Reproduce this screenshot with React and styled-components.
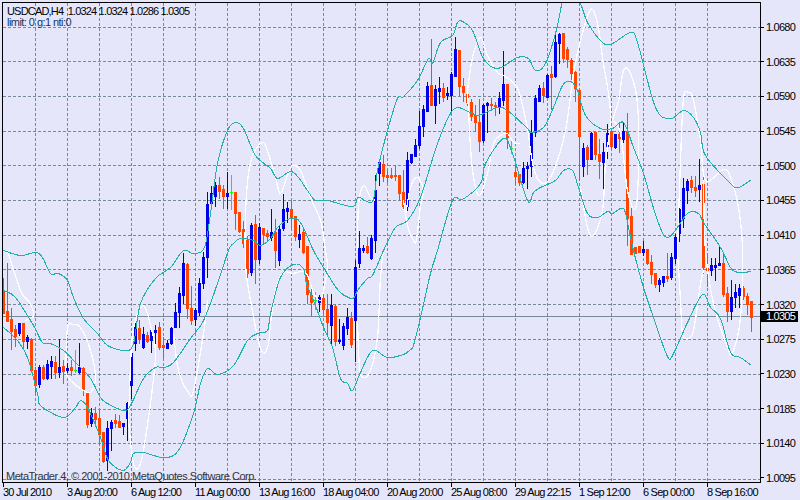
import styled, { createGlobalStyle } from 'styled-components'

// [colour, high, body top, body bottom, low] in screen pixels, one bar every 4px from x=3
const bars = [
  ['r',278,290,313,313],['r',263,311,321,321],['r',308,319,331,349],['r',325,329,336,346],['b',323,323,333,335],
  ['r',323,323,341,348],['b',335,337,341,348],['r',338,339,370,371],['r',367,370,385,394],['b',365,367,384,387],
  ['r',365,367,378,379],['b',360,364,378,379],['b',356,361,366,378],['r',356,362,372,378],['b',339,367,372,377],
  ['r',360,366,371,383],['b',363,368,370,372],['r',360,367,370,375],['g',350,370,370,372],['b',343,367,372,373],
  ['r',367,368,390,395],['r',392,393,424,427],['b',408,413,423,426],['r',407,413,419,425],['r',410,418,434,443],
  ['r',432,432,461,462],['b',421,428,460,470],['b',420,422,428,450],['r',414,420,423,427],['r',415,421,427,427],
  ['b',423,423,426,434],['b',402,403,418,440],['b',344,353,385,398],['b',320,326,343,350],['r',320,328,339,343],
  ['b',327,334,347,348],['r',332,335,341,342],['b',330,330,340,352],['b',325,330,332,348],['r',322,327,347,349],
  ['r',337,345,347,357],['b',340,343,348,348],['b',327,328,343,344],['b',303,312,327,327],['b',287,293,312,327],
  ['b',253,263,295,303],['r',263,264,308,318],['r',286,308,320,324],['b',308,310,319,325],['b',278,283,312,315],
  ['b',252,257,283,288],['b',192,204,257,277],['b',186,193,203,209],['b',182,185,196,206],['r',177,185,191,198],
  ['r',185,189,196,208],['b',172,193,196,208],['g',175,192,192,209],['r',192,192,213,229],['r',212,212,231,232],
  ['r',221,229,243,247],['r',236,240,273,278],['b',223,225,272,275],['r',215,224,259,283],['b',223,227,259,263],
  ['r',228,228,234,243],['r',230,233,236,240],['b',209,232,237,240],['r',219,232,250,267],['b',225,229,260,265],
  ['b',194,209,228,230],['b',202,208,211,222],['r',201,209,217,227],['r',216,216,236,240],['b',225,234,239,247],
  ['r',228,232,252,253],['r',246,246,294,303],['r',285,295,302,315],['g',292,300,300,309],['b',295,297,302,311],
  ['r',288,298,309,313],['r',294,309,322,334],['b',294,305,325,344],['r',304,306,341,345],['b',319,340,341,343],
  ['b',323,326,345,349],['b',308,317,328,334],['r',312,318,344,347],['b',260,267,320,361],['b',231,248,263,267],
  ['b',245,248,250,252],['r',237,246,252,253],['b',235,238,258,259],['b',175,190,240,252],['b',162,162,173,185],
  ['r',155,164,176,181],['r',170,175,177,182],['r',168,175,177,178],['r',165,175,176,180],['r',175,175,193,199],
  ['r',170,192,206,208],['b',152,160,206,210],['b',154,154,162,163],['b',139,145,156,156],['b',111,126,145,148],
  ['b',105,109,126,136],['b',82,86,111,111],['r',39,85,105,105],['b',85,89,105,123],['b',77,88,91,103],
  ['r',83,88,97,101],['b',87,93,95,99],['b',72,74,95,111],['b',37,49,76,76],['r',50,50,86,95],
  ['r',78,86,92,101],['r',88,94,102,105],['r',99,102,116,120],['r',105,115,122,131],['r',99,122,141,151],
  ['b',104,105,140,142],['b',102,103,105,132],['r',98,104,105,110],['r',102,105,106,115],['b',92,98,106,113],
  ['b',51,84,100,105],['r',84,84,137,148],['g',139,148,148,153],['r',159,172,176,184],['r',174,174,182,185],
  ['b',162,168,182,183],['b',162,166,168,188],['b',120,132,166,176],['b',95,98,132,136],['b',85,88,101,101],
  ['r',82,88,95,102],['b',74,75,97,97],['r',66,74,77,109],['b',35,42,76,77],['b',33,34,43,63],
  ['r',33,33,58,62],['r',47,49,59,67],['r',58,60,73,79],['r',71,72,88,101],['r',90,90,136,180],
  ['b',143,148,166,176],['r',145,147,159,174],['b',132,133,159,159],['r',132,132,154,159],['r',139,154,161,178],
  ['b',143,152,162,188],['b',124,133,146,158],['r',131,131,146,148],['b',134,134,147,148],['r',124,134,138,152],
  ['b',122,131,139,142],['r',113,131,218,245],['r',208,216,254,254],['r',247,247,253,253],['r',246,246,252,252],
  ['b',241,249,252,255],['r',249,249,263,264],['r',255,262,274,283],['r',273,273,284,287],['b',278,280,284,291],
  ['b',276,276,282,286],['r',253,276,278,281],['b',253,257,277,279],['b',234,237,258,263],['b',180,209,233,241],
  ['b',178,188,218,227],['b',179,181,190,203],['r',176,180,187,192],['r',176,187,190,196],['b',159,185,189,201],
  ['r',170,184,267,273],['r',255,268,270,286],['b',258,265,270,275],['b',258,265,267,280],['b',247,263,265,265],
  ['r',253,263,294,296],['r',287,293,311,321],['b',280,297,311,319],['b',284,292,297,307],['b',284,288,295,307],
  ['r',286,288,296,299],['r',293,296,304,314],['r',301,301,317,331],
]

const upperBand = [[3,250],[20,255],[35,252],[42,257],[50,273],[58,273],[67,280],[73,297],[83,318],[97,333],[107,345],[125,350],[133,343],[140,303],[155,278],[170,267],[183,250],[193,253],[204,247],[210,213],[217,163],[227,130],[235,122],[243,128],[255,155],[270,168],[277,178],[290,171],[298,177],[307,190],[315,200],[327,200],[352,206],[358,197],[372,201],[377,170],[387,130],[397,98],[403,96],[417,80],[428,58],[432,63],[440,42],[452,35],[457,22],[462,21],[472,30],[483,58],[497,68],[517,57],[528,58],[535,70],[545,63],[555,33],[560,10],[563,0],[578,0],[587,22],[602,42],[612,43],[630,32],[637,42],[655,107],[670,118],[683,110],[693,117],[700,132],[705,155],[730,183],[738,187],[751,179]]

const middleBand = [[3,290],[15,297],[33,325],[42,342],[50,343],[63,350],[75,362],[90,378],[100,397],[107,403],[123,410],[130,405],[143,378],[155,367],[163,367],[173,362],[190,338],[203,320],[217,283],[228,250],[233,243],[240,238],[253,240],[260,245],[270,238],[277,227],[290,218],[300,222],[313,250],[323,267],[338,290],[352,298],[357,290],[367,278],[372,275],[380,257],[383,250],[395,227],[407,220],[420,197],[437,143],[453,109],[470,112],[478,115],[497,107],[507,110],[527,128],[530,132],[543,127],[553,107],[562,85],[570,81],[577,90],[585,115],[600,128],[612,128],[623,122],[633,147],[643,173],[657,220],[668,237],[687,213],[698,213],[703,222],[720,247],[730,267],[738,272],[751,271]]

const lowerBand = [[3,327],[17,340],[27,357],[37,393],[40,405],[63,417],[75,407],[80,400],[87,407],[100,437],[108,460],[122,470],[130,462],[133,453],[143,452],[163,457],[178,450],[193,413],[200,383],[207,368],[217,374],[233,365],[247,340],[257,333],[267,330],[270,313],[280,277],[293,264],[303,268],[306,283],[315,305],[323,327],[332,347],[340,378],[347,383],[352,390],[360,372],[372,350],[387,357],[403,354],[410,349],[413,345],[420,317],[430,273],[437,250],[452,200],[462,199],[480,183],[485,163],[503,138],[512,153],[527,200],[533,192],[540,187],[555,180],[563,170],[572,170],[578,187],[587,213],[597,217],[607,211],[612,213],[623,208],[628,227],[633,250],[643,287],[653,317],[667,356],[673,353],[687,322],[702,294],[710,307],[720,318],[730,352],[740,357],[751,365]]

const whiteLines = [
  [[7,250],[20,290],[29,302],[33,315],[25,320]],
  [[65,372],[67,327],[72,324],[80,327],[90,350],[95,377],[90,392],[80,388],[70,380],[65,372]],
  [[128,420],[131,345],[135,320],[143,305],[150,325],[155,355],[148,417],[140,463],[133,463],[128,420]],
  [[173,333],[178,370],[188,392],[193,390],[203,333],[207,300]],
  [[247,283],[257,337],[263,353],[268,343],[270,323],[275,290],[283,272],[292,273],[305,272],[313,292],[320,300],[323,290],[327,267],[325,250],[320,220],[310,197],[300,170],[292,165],[287,175],[280,193],[275,177],[270,160],[263,142],[253,153],[248,173],[245,213],[245,262],[247,283]],
  [[357,320],[359,367],[363,377],[370,370],[377,337],[380,277],[383,250]],
  [[357,250],[358,205],[363,185],[370,197],[375,200]],
  [[405,215],[410,187],[417,177],[423,190],[420,205],[416,239],[413,240],[407,225],[403,200]],
  [[467,90],[470,147],[473,177],[479,195],[487,173],[493,143],[500,135],[507,133],[513,142],[520,143]],
  [[527,127],[517,88],[503,75],[497,72],[487,55],[480,37],[472,57],[467,90]],
  [[527,127],[533,167],[542,183],[552,173],[565,130],[573,73],[580,40],[590,9],[597,23],[602,57],[610,113],[605,163],[602,210],[593,235],[587,227],[580,187]],
  [[612,120],[620,133],[627,190],[635,208],[638,167],[637,103],[630,73],[623,70],[618,100],[612,120]],
  [[677,250],[680,160],[683,98],[688,92],[693,100],[700,140],[705,180],[723,169],[730,177],[738,207],[742,250],[740,317],[732,352],[727,347],[713,303],[705,250],[703,180]],
  [[677,250],[680,300],[682,333],[687,338],[693,330],[700,283],[703,270]],
]

const barColors = { r: '#ff4500', b: '#0000e6', g: '#00ff00' }
const gridY = [27,61,96,131,165,200,235,269,304,339,374,409,443,479]
const gridX = Array.from({ length: 22 }, (_, i) => 35 + i * 32)
const prices = ['1.0680','1.0635','1.0590','1.0545','1.0500','1.0455','1.0410','1.0365','1.0320','1.0275','1.0230','1.0185','1.0140','1.0095']
const dates = ['30 Jul 2010','3 Aug 20:00','6 Aug 12:00','11 Aug 00:00','13 Aug 16:00','18 Aug 04:00','20 Aug 20:00','25 Aug 08:00','29 Aug 22:15','1 Sep 12:00','6 Sep 00:00','8 Sep 16:00']

// smooth the traced points so the bands curve like the indicator does
const toCurve = (pts) => {
  let d = `M${pts[0][0] + 0.5} ${pts[0][1] + 0.5}`
  for (let i = 0; i < pts.length - 1; i++) {
    const p0 = pts[i - 1] || pts[i]
    const p1 = pts[i]
    const p2 = pts[i + 1]
    const p3 = pts[i + 2] || p2
    const c1x = p1[0] + (p2[0] - p0[0]) / 6
    const c1y = p1[1] + (p2[1] - p0[1]) / 6
    const c2x = p2[0] - (p3[0] - p1[0]) / 6
    const c2y = p2[1] - (p3[1] - p1[1]) / 6
    d += ` C${c1x + 0.5} ${c1y + 0.5} ${c2x + 0.5} ${c2y + 0.5} ${p2[0] + 0.5} ${p2[1] + 0.5}`
  }
  return d
}

function ChartDrawing() {
  return (
    <ChartSvg viewBox="3 3 757 479" shapeRendering="crispEdges" fill="none">
      {gridY.map((y) => <line key={y} x1="3" x2="760" y1={y + 0.5} y2={y + 0.5} stroke="#778899" strokeDasharray="3 2" />)}
      {gridX.map((x) => <line key={x} x1={x + 0.5} x2={x + 0.5} y1="3" y2="482" stroke="#778899" strokeDasharray="3 2" />)}
      <line x1="3" x2="760" y1="316.5" y2="316.5" stroke="#778899" />
      {bars.map(([c, high, top, bottom, low], i) => {
        const x = 3 + i * 4
        return (
          <g key={i} fill={barColors[c]}>
            <rect x={x} y={high} width="1" height={low - high + 1} />
            <rect x={x - 1} y={top} width="3" height={bottom - top + 1} />
          </g>
        )
      })}
      {whiteLines.map((line, i) => <path key={i} d={toCurve(line)} stroke="#ffffff" strokeWidth="1.3" />)}
      <path d={toCurve(upperBand)} stroke="#20b2aa" strokeWidth="1.05" />
      <path d={toCurve(middleBand)} stroke="#20b2aa" strokeWidth="1.05" />
      <path d={toCurve(lowerBand)} stroke="#20b2aa" strokeWidth="1.05" />
    </ChartSvg>
  )
}

export default function App() {
  return (
    <>
      <GlobalStyle />
      <Terminal>
        <ChartRow>
          <Plot>
            <ChartDrawing />
            <Legend>
              <Symbol>USDCAD,H4&nbsp; 1.0324 1.0324 1.0286 1.0305</Symbol>
              <Status>limit: 0 g:1 nti:0</Status>
            </Legend>
            <Copyright>MetaTrader 4, © 2001-2010 MetaQuotes Software Corp.</Copyright>
          </Plot>
          <PriceAxis>
            {prices.map((p) => (
              <PriceRow key={p}>
                <PriceTick />
                {p}
              </PriceRow>
            ))}
            <PriceTag>1.0305</PriceTag>
          </PriceAxis>
        </ChartRow>
        <TimeAxis>
          {dates.map((d) => (
            <TimeCell key={d}>
              <TimeTick />
              <TimeLabel>{d}</TimeLabel>
            </TimeCell>
          ))}
        </TimeAxis>
      </Terminal>
    </>
  )
}

const GlobalStyle = createGlobalStyle`
  body {
    margin: 0;
    background: #e6e6fa;
  }
`

const Terminal = styled.div`
  width: 800px;
  height: 500px;
  padding: 2px 0 0 2px;
  box-sizing: border-box;
  overflow: hidden;
  background: #e6e6fa;
  color: #000;
  font-family: "Liberation Sans", Arial, sans-serif;
  font-size: 11px;
  letter-spacing: -0.78px;
  line-height: 12px;
`

const ChartRow = styled.div`
  display: flex;
  height: 481px;
`

const Plot = styled.div`
  position: relative;
  width: 759px;
  height: 481px;
  box-sizing: border-box;
  border: 1px solid #000;
`

const ChartSvg = styled.svg`
  display: block;
  width: 757px;
  height: 479px;
`

const Legend = styled.div`
  position: absolute;
  top: 2px;
  left: 4px;
`

const Symbol = styled.div`
  white-space: pre;
  letter-spacing: -0.82px;
`

const Status = styled.div`
  margin-top: -1px;
  color: #16365c;
  letter-spacing: -0.55px;
`

const Copyright = styled.div`
  position: absolute;
  left: 3px;
  bottom: 0;
  color: #33333d;
  letter-spacing: -0.48px;
`

const PriceAxis = styled.div`
  position: relative;
  display: flex;
  flex-direction: column;
  justify-content: space-between;
  width: 39px;
  height: 482px;
  padding-top: 19px;
  box-sizing: border-box;
`

const PriceRow = styled.div`
  display: flex;
  align-items: center;
  gap: 2px;
  height: 12px;
`

const PriceTick = styled.span`
  width: 3px;
  height: 1px;
  background: #000;
`

const PriceTag = styled.div`
  position: absolute;
  top: 309px;
  left: 0;
  width: 37px;
  height: 11px;
  padding-left: 5px;
  box-sizing: border-box;
  background: #000;
  color: #fff;
  line-height: 11px;
`

const TimeAxis = styled.div`
  display: grid;
  grid-template-columns: repeat(12, 64px);
  padding-left: 1px;
`

const TimeCell = styled.div`
  display: flex;
  flex-direction: column;
`

const TimeTick = styled.span`
  width: 1px;
  height: 4px;
  background: #000;
`

const TimeLabel = styled.span`
  margin-top: -1px;
  white-space: nowrap;
`
